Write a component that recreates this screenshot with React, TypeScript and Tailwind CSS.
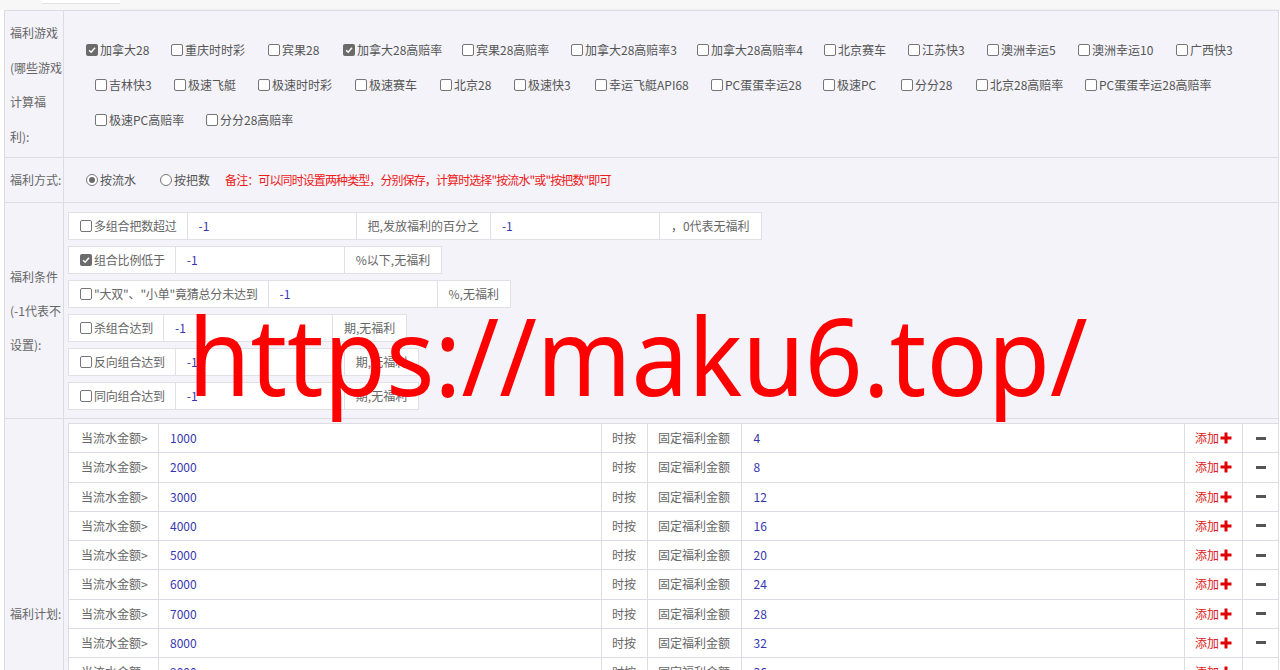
import React from "react";

// game checkboxes, with the slot width each one takes in the row
const row1: [string, string][] = [
	["加拿大28", "w-[85px]"],
	["重庆时时彩", "w-[97px]"],
	["宾果28", "w-[75px]"],
	["加拿大28高赔率", "w-[119px]"],
	["宾果28高赔率", "w-[109px]"],
	["加拿大28高赔率3", "w-[126px]"],
	["加拿大28高赔率4", "w-[127px]"],
	["北京赛车", "w-[84px]"],
	["江苏快3", "w-[79px]"],
	["澳洲幸运5", "w-[91px]"],
	["澳洲幸运10", "w-[98px]"],
	["广西快3", ""],
];
const row2: [string, string][] = [
	["吉林快3", "w-[79px]"],
	["极速飞艇", "w-[84px]"],
	["极速时时彩", "w-[97px]"],
	["极速赛车", "w-[85px]"],
	["北京28", "w-[74px]"],
	["极速快3", "w-[81px]"],
	["幸运飞艇API68", "w-[116px]"],
	["PC蛋蛋幸运28", "w-[112px]"],
	["极速PC", "w-[78px]"],
	["分分28", "w-[75px]"],
	["北京28高赔率", "w-[109px]"],
	["PC蛋蛋幸运28高赔率", ""],
];
const row3: [string, string][] = [
	["极速PC高赔率", "w-[111px]"],
	["分分28高赔率", ""],
];
const checked = new Set(["加拿大28", "加拿大28高赔率"]);

const conditions = [
	{ label: "多组合把数超过", on: false, inputs: ["-1", "-1"], mid: "把,发放福利的百分之", tail: "，0代表无福利" },
	{ label: "组合比例低于", on: true, inputs: ["-1"], tail: "%以下,无福利" },
	{ label: "\"大双\"、\"小单\"竟猜总分未达到", on: false, inputs: ["-1"], tail: "%,无福利" },
	{ label: "杀组合达到", on: false, inputs: ["-1"], tail: "期,无福利" },
	{ label: "反向组合达到", on: false, inputs: ["-1"], tail: "期,无福利" },
	{ label: "同向组合达到", on: false, inputs: ["-1"], tail: "期,无福利" },
];

const plans = Array.from({ length: 13 }, (_, i) => ({ amount: (i + 1) * 1000, bonus: (i + 1) * 4 }));

function Box({ on }: { on: boolean }) {
	return on ? (
		<span className="w-[12px] h-[12px] rounded-[2px] bg-[#6b6b6b] flex items-center justify-center shrink-0">
			<svg viewBox="0 0 12 12" className="w-[10px] h-[10px]">
				<path d="M2.5 6.2 L5 8.6 L9.6 3.4" fill="none" stroke="#fff" strokeWidth="1.8" />
			</svg>
		</span>
	) : (
		<span className="w-[12px] h-[12px] rounded-[2px] border border-[#767676] bg-white shrink-0" />
	);
}

function Radio({ on }: { on: boolean }) {
	return (
		<span className="w-[12px] h-[12px] rounded-full border border-[#767676] bg-white flex items-center justify-center shrink-0">
			{on && <span className="w-[6px] h-[6px] rounded-full bg-[#6b6b6b]" />}
		</span>
	);
}

function GameRow({ items, pad }: { items: [string, string][]; pad: string }) {
	return (
		<div className={`h-[35px] flex items-center ${pad}`}>
			{items.map(([g, w]) => (
				<label key={g} className={`flex items-center gap-[2px] text-[#555] whitespace-nowrap shrink-0 ${w}`}>
					<Box on={checked.has(g)} />
					{g}
				</label>
			))}
		</div>
	);
}

export default function App() {
	return (
		<div className="relative min-h-screen bg-white text-[12px] text-[#666] font-['Microsoft_YaHei','Noto_Sans_CJK_SC',sans-serif] overflow-hidden">
			{/* tab strip */}
			<div className="h-[10px] flex bg-[#f7f7f7]">
				<div className="ml-[42px] w-[78px] h-[4px] bg-white border-b border-[#e2e2e2]" />
				<div className="flex-1 border-b border-[#eee]" />
			</div>

			<div className="mx-[4px] mr-[1px] border-l border-t border-r border-[#dcdce4] bg-[#f3f3f9]">
				{/* 福利游戏 */}
				<div className="flex border-b border-[#dcdce4]">
					<div className="w-[59px] shrink-0 border-r border-[#dcdce4] pl-[5px] pt-[5px] leading-[34.5px]">
						福利游戏
						<br />
						(哪些游戏
						<br />
						计算福
						<br />
						利):
					</div>
					<div className="flex-1 pt-[21px] pb-[20px] overflow-hidden">
						<GameRow items={row1} pad="pl-[22px]" />
						<GameRow items={row2} pad="pl-[31px]" />
						<GameRow items={row3} pad="pl-[31px]" />
					</div>
				</div>

				{/* 福利方式 */}
				<div className="flex h-[45px] border-b border-[#dcdce4]">
					<div className="w-[59px] shrink-0 border-r border-[#dcdce4] pl-[5px] flex items-center">福利方式:</div>
					<div className="flex-1 flex items-center pl-[22px] text-[#555]">
						<label className="flex items-center gap-[2px]">
							<Radio on />
							按流水
						</label>
						<label className="flex items-center gap-[2px] ml-[24px]">
							<Radio on={false} />
							按把数
						</label>
						<span className="ml-[15px] text-[#f01818] tracking-[-0.9px]">
							备注：可以同时设置两种类型，分别保存，计算时选择"按流水"或"按把数"即可
						</span>
					</div>
				</div>

				{/* 福利条件 */}
				<div className="flex border-b border-[#dcdce4]">
					<div className="w-[59px] shrink-0 border-r border-[#dcdce4] pl-[5px] flex items-center leading-[34px]">
						<div>
							福利条件
							<br />
							(-1代表不
							<br />
							设置):
						</div>
					</div>
					<div className="flex-1 pl-[4px] pt-[9px] pb-[8px] flex flex-col gap-[6px]">
						{conditions.map((c) => (
							<div key={c.label} className="flex h-[28px] text-[#666]">
								<div className="flex items-center gap-[2px] pl-[11px] pr-[10px] bg-white border border-[#e0e0e6] tracking-[-0.2px]">
									<Box on={c.on} />
									{c.label}
								</div>
								<div className="w-[168px] flex items-center pl-[11px] bg-white border-y border-[#e0e0e6] text-[#3636b0]">{c.inputs[0]}</div>
								{c.mid && (
									<>
										<div className="flex items-center px-[11px] bg-white border border-[#e0e0e6]">{c.mid}</div>
										<div className="w-[168px] flex items-center pl-[11px] bg-white border-y border-[#e0e0e6] text-[#3636b0]">{c.inputs[1]}</div>
									</>
								)}
								<div className="flex items-center px-[11px] bg-white border border-[#e0e0e6]">{c.tail}</div>
							</div>
						))}
					</div>
				</div>

				{/* 福利计划 */}
				<div className="flex">
					<div className="w-[59px] shrink-0 border-r border-[#dcdce4] pl-[5px] flex items-center">福利计划:</div>
					<div className="flex-1 pl-[4px] pt-[4px] pb-[5px]">
						<div className="border-t border-l border-[#dcdce4] bg-white">
							{plans.map((p) => (
								<div key={p.amount} className="flex h-[29.25px] border-b border-[#dcdce4]">
									<div className="w-[90px] flex items-center pl-[12px] border-r border-[#dcdce4]">当流水金额&gt;</div>
									<div className="flex-1 flex items-center pl-[11px] border-r border-[#dcdce4] text-[#3636b0]">{p.amount}</div>
									<div className="w-[46px] flex items-center justify-center border-r border-[#dcdce4]">时按</div>
									<div className="w-[94px] flex items-center justify-center border-r border-[#dcdce4]">固定福利金额</div>
									<div className="flex-1 flex items-center pl-[12px] border-r border-[#dcdce4] text-[#3636b0]">{p.bonus}</div>
									<div className="w-[58px] flex items-center justify-center border-r border-[#dcdce4] text-[#e02020]">
										添加
										<svg viewBox="0 0 12 12" className="w-[12px] h-[12px] ml-[1px]">
											<path d="M6 0.5 V11.5 M0.5 6 H11.5" stroke="#e00000" strokeWidth="3" />
										</svg>
									</div>
									<div className="w-[35px] flex items-center justify-center">
										<span className="w-[10px] h-[3px] bg-[#555]" />
									</div>
								</div>
							))}
						</div>
					</div>
				</div>
			</div>

			{/* watermark */}
			<div className="absolute left-[188px] top-[301px] origin-left scale-x-[0.946] text-[#ff0000] text-[107px] leading-none font-['Noto_Sans',sans-serif] pointer-events-none whitespace-nowrap">
				https://maku6.top/
			</div>
		</div>
	);
}
